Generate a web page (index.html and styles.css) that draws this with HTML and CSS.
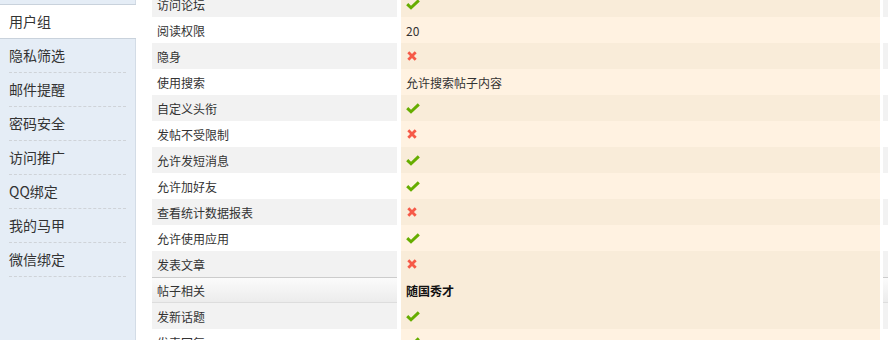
FILE: index.html
```html
<!DOCTYPE html>
<html lang="zh-CN">
<head>
<meta charset="utf-8">
<title>用户组</title>
<link rel="stylesheet" href="styles.css">
</head>
<body>
<div class="page">
  <aside class="side">
    <ul class="nav">
      <li class="nav-item prev"></li>
      <li class="nav-item active">用户组</li>
      <li class="nav-item">隐私筛选</li>
      <li class="nav-item">邮件提醒</li>
      <li class="nav-item">密码安全</li>
      <li class="nav-item">访问推广</li>
      <li class="nav-item">QQ绑定</li>
      <li class="nav-item">我的马甲</li>
      <li class="nav-item">微信绑定</li>
    </ul>
  </aside>
  <main class="main">
    <div class="cols">
      <div class="col col-label">
        <div class="row alt">访问论坛</div>
        <div class="row">阅读权限</div>
        <div class="row alt">隐身</div>
        <div class="row">使用搜索</div>
        <div class="row alt">自定义头衔</div>
        <div class="row">发帖不受限制</div>
        <div class="row alt">允许发短消息</div>
        <div class="row">允许加好友</div>
        <div class="row alt">查看统计数据报表</div>
        <div class="row">允许使用应用</div>
        <div class="row alt">发表文章</div>
        <div class="row head">帖子相关</div>
        <div class="row alt">发新话题</div>
        <div class="row">发表回复</div>
      </div>
      <div class="col col-group">
        <div class="row alt"><svg class="ok" width="14" height="11" viewBox="0 0 14 11"><path d="M1.2 5.2 L5 8.8 L12.8 1.4"/></svg></div>
        <div class="row">20</div>
        <div class="row alt"><svg class="no" width="10" height="10" viewBox="0 0 10 10"><path d="M1.3 1.3 L8.7 8.7 M8.7 1.3 L1.3 8.7"/></svg></div>
        <div class="row">允许搜索帖子内容</div>
        <div class="row alt"><svg class="ok" width="14" height="11" viewBox="0 0 14 11"><path d="M1.2 5.2 L5 8.8 L12.8 1.4"/></svg></div>
        <div class="row"><svg class="no" width="10" height="10" viewBox="0 0 10 10"><path d="M1.3 1.3 L8.7 8.7 M8.7 1.3 L1.3 8.7"/></svg></div>
        <div class="row alt"><svg class="ok" width="14" height="11" viewBox="0 0 14 11"><path d="M1.2 5.2 L5 8.8 L12.8 1.4"/></svg></div>
        <div class="row"><svg class="ok" width="14" height="11" viewBox="0 0 14 11"><path d="M1.2 5.2 L5 8.8 L12.8 1.4"/></svg></div>
        <div class="row alt"><svg class="no" width="10" height="10" viewBox="0 0 10 10"><path d="M1.3 1.3 L8.7 8.7 M8.7 1.3 L1.3 8.7"/></svg></div>
        <div class="row"><svg class="ok" width="14" height="11" viewBox="0 0 14 11"><path d="M1.2 5.2 L5 8.8 L12.8 1.4"/></svg></div>
        <div class="row alt"><svg class="no" width="10" height="10" viewBox="0 0 10 10"><path d="M1.3 1.3 L8.7 8.7 M8.7 1.3 L1.3 8.7"/></svg></div>
        <div class="row alt group-name">随国秀才</div>
        <div class="row alt"><svg class="ok" width="14" height="11" viewBox="0 0 14 11"><path d="M1.2 5.2 L5 8.8 L12.8 1.4"/></svg></div>
        <div class="row"><svg class="ok" width="14" height="11" viewBox="0 0 14 11"><path d="M1.2 5.2 L5 8.8 L12.8 1.4"/></svg></div>
      </div>
      <div class="col col-next">
        <div class="row alt"></div>
        <div class="row"></div>
        <div class="row alt"></div>
        <div class="row"></div>
        <div class="row alt"></div>
        <div class="row"></div>
        <div class="row alt"></div>
        <div class="row"></div>
        <div class="row alt"></div>
        <div class="row"></div>
        <div class="row alt"></div>
        <div class="row head"></div>
        <div class="row alt"></div>
        <div class="row"></div>
      </div>
    </div>
  </main>
</div>
</body>
</html>
```

FILE: styles.css
```css
html, body {
  margin: 0;
  padding: 0;
  background: #fff;
}
body {
  width: 888px;
  height: 340px;
  overflow: hidden;
  font-family: "Microsoft YaHei", "Noto Sans CJK SC", "Noto Sans", sans-serif;
  color: #333;
}
.page {
  display: flex;
  height: 340px;
}
.side {
  width: 135px;
  flex: none;
  background: #e5edf6;
  border-right: 1px solid #d3dce6;
}
.nav {
  list-style: none;
  margin: 0;
  padding: 0;
}
.nav-item {
  margin: 0 9px;
  height: 33px;
  line-height: 33px;
  font-size: 14px;
  border-bottom: 1px dashed #cfd3d8;
  white-space: nowrap;
}
.nav-item.prev {
  height: 4px;
  border-bottom: none;
}
.nav-item.active {
  margin: 0 -1px 0 0;
  padding-left: 9px;
  background: #fff;
  border-top: 1px solid #c9d2dc;
  border-bottom: 1px solid #c9d2dc;
}
.main {
  flex: 1;
  min-width: 0;
  overflow: hidden;
  padding-left: 16px;
}
.cols {
  display: flex;
  margin-top: -9px;
}
.col {
  flex: none;
}
.col-label {
  width: 245px;
}
.col-group {
  width: 479px;
  margin-left: 4px;
}
.col-next {
  width: 200px;
  margin-left: 3px;
}
.row {
  height: 26px;
  display: flex;
  align-items: center;
  font-size: 12px;
  box-sizing: border-box;
  white-space: nowrap;
}
.col-label .row {
  padding-left: 5px;
  background: #fff;
}
.col-label .row.alt,
.col-next .row.alt {
  background: #f2f2f2;
}
.col-label .row.head,
.col-next .row.head {
  background: linear-gradient(#fbfbfb, #ececec);
  border-top: 1px solid #cccccc;
  border-bottom: 1px solid #dddddd;
}
.col-group .row {
  padding-left: 5px;
  background: #fff2e1;
}
.col-group .row.alt {
  background: #f9ecd9;
}
.group-name {
  font-weight: bold;
  color: #111;
}
.ok path {
  fill: none;
  stroke: #66ad00;
  stroke-width: 3;
}
.no path {
  fill: none;
  stroke: #f65a48;
  stroke-width: 2.8;
}
.no {
  margin-left: 1px;
}
```
